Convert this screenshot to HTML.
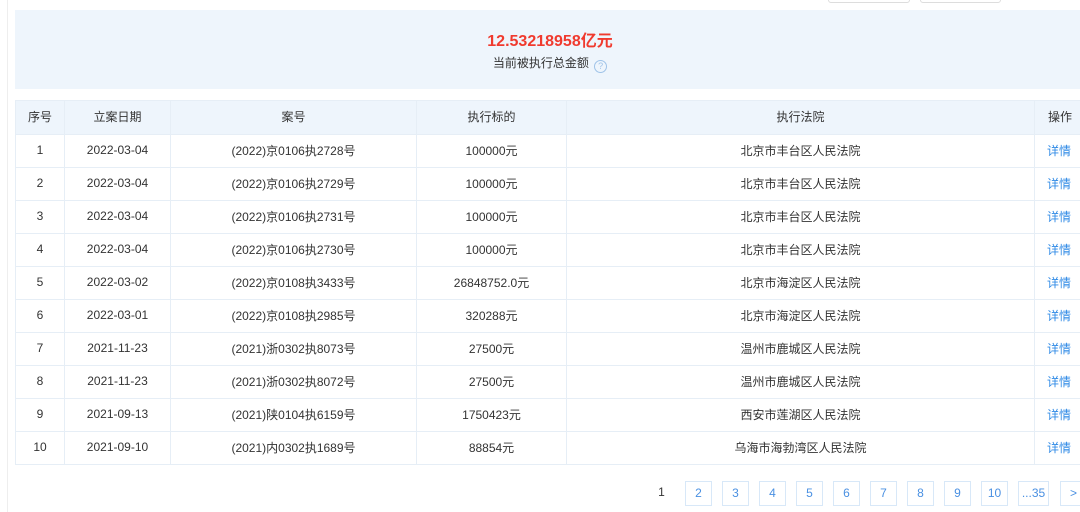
<!DOCTYPE html>
<html><head><meta charset="utf-8"><style>
*{margin:0;padding:0;box-sizing:border-box}
body{width:1080px;height:512px;overflow:hidden;background:#fff;font-family:"Liberation Sans","Noto Sans CJK SC",sans-serif;color:#333;position:relative;font-size:12px}
.btn{position:absolute;top:-6px;height:9px;border:1px solid #ddd;border-radius:3px;background:#fff}
.sum{position:absolute;left:15px;top:10px;width:1070px;height:79px;background:#eef5fc}
.amt{position:absolute;top:17px;width:100%;text-align:center;color:#f03a2e;font-weight:bold;font-size:16px}
.lbl{position:absolute;top:44px;width:100%;text-align:center;font-size:12px;color:#333}
.q{display:inline-block;width:13px;height:13px;border:1px solid #9fc3e8;border-radius:50%;color:#9fc3e8;font-size:9px;line-height:11px;vertical-align:-2px;margin-left:2px}
table{position:absolute;left:15px;top:100px;border-collapse:collapse;table-layout:fixed;width:1079px}
td,th{border:1px solid #e6eef6;text-align:center;font-weight:normal;height:33px;font-size:12px;color:#333;white-space:nowrap;padding-bottom:2px}
th{background:#eef5fc;height:34px}
td.l{color:#2f8ae6;text-align:left;padding-left:12px}
.pg{position:absolute;top:481px;height:25px;width:27px;border:1px solid #d8e8f8;color:#4a90e2;text-align:center;line-height:23px;font-size:12px}
.leftline{position:absolute;left:7px;top:0;width:1px;height:512px;background:#eee}
</style></head><body>
<div class="leftline"></div>
<div class="btn" style="left:828px;width:82px"></div>
<div class="btn" style="left:920px;width:81px"></div>
<div class="sum"><div class="amt">12.53218958亿元</div><div class="lbl">当前被执行总金额 <span class="q">?</span></div></div>
<table>
<colgroup><col style="width:49px"><col style="width:106px"><col style="width:246px"><col style="width:150px"><col style="width:468px"><col style="width:60px"></colgroup>
<tr><th>序号</th><th>立案日期</th><th>案号</th><th>执行标的</th><th>执行法院</th><th style="text-align:left;padding-left:13px">操作</th></tr>
<tr><td>1</td><td>2022-03-04</td><td>(2022)京0106执2728号</td><td>100000元</td><td>北京市丰台区人民法院</td><td class="l">详情</td></tr>
<tr><td>2</td><td>2022-03-04</td><td>(2022)京0106执2729号</td><td>100000元</td><td>北京市丰台区人民法院</td><td class="l">详情</td></tr>
<tr><td>3</td><td>2022-03-04</td><td>(2022)京0106执2731号</td><td>100000元</td><td>北京市丰台区人民法院</td><td class="l">详情</td></tr>
<tr><td>4</td><td>2022-03-04</td><td>(2022)京0106执2730号</td><td>100000元</td><td>北京市丰台区人民法院</td><td class="l">详情</td></tr>
<tr><td>5</td><td>2022-03-02</td><td>(2022)京0108执3433号</td><td>26848752.0元</td><td>北京市海淀区人民法院</td><td class="l">详情</td></tr>
<tr><td>6</td><td>2022-03-01</td><td>(2022)京0108执2985号</td><td>320288元</td><td>北京市海淀区人民法院</td><td class="l">详情</td></tr>
<tr><td>7</td><td>2021-11-23</td><td>(2021)浙0302执8073号</td><td>27500元</td><td>温州市鹿城区人民法院</td><td class="l">详情</td></tr>
<tr><td>8</td><td>2021-11-23</td><td>(2021)浙0302执8072号</td><td>27500元</td><td>温州市鹿城区人民法院</td><td class="l">详情</td></tr>
<tr><td>9</td><td>2021-09-13</td><td>(2021)陕0104执6159号</td><td>1750423元</td><td>西安市莲湖区人民法院</td><td class="l">详情</td></tr>
<tr><td>10</td><td>2021-09-10</td><td>(2021)内0302执1689号</td><td>88854元</td><td>乌海市海勃湾区人民法院</td><td class="l">详情</td></tr>
</table>
<div class="pg" style="left:648px;border:none;color:#333">1</div>
<div class="pg" style="left:685px">2</div>
<div class="pg" style="left:722px">3</div>
<div class="pg" style="left:759px">4</div>
<div class="pg" style="left:796px">5</div>
<div class="pg" style="left:833px">6</div>
<div class="pg" style="left:870px">7</div>
<div class="pg" style="left:907px">8</div>
<div class="pg" style="left:944px">9</div>
<div class="pg" style="left:981px">10</div>
<div class="pg" style="left:1018px;width:31px">...35</div>
<div class="pg" style="left:1060px">&gt;</div>
</body></html>
